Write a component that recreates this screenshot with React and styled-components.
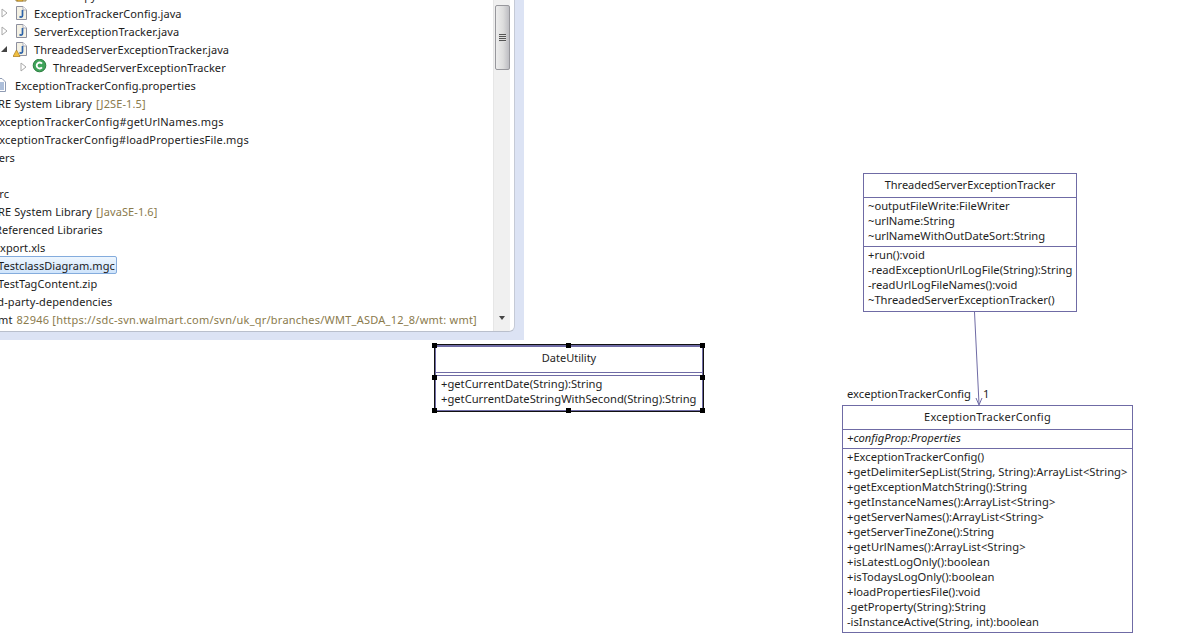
import React from "react";
import styled, { createGlobalStyle } from "styled-components";

const Global = createGlobalStyle`
  html, body { margin: 0; padding: 0; background: #fff; }
  body { width: 1198px; height: 644px; overflow: hidden; font-family: "Noto Sans", "Open Sans", sans-serif; }
`;

const Page = styled.div`
  position: relative;
  width: 1198px;
  height: 644px;
  overflow: hidden;
  background: #fff;
`;

const WindowFrame = styled.div`
  position: absolute;
  left: -20px;
  top: -20px;
  width: 544px;
  height: 360px;
  box-sizing: border-box;
  padding: 0 9px 8px 0;
  background: #dce3f4;
`;

const Explorer = styled.div`
  display: flex;
  height: 100%;
  box-sizing: border-box;
  padding-right: 4px;
  background: #fff;
  border-right: 1px solid #c5cad6;
  border-bottom: 1px solid #b9bfcc;
  border-bottom-right-radius: 6px;
  overflow: hidden;
`;

const TreeViewport = styled.div`
  flex: 1;
  min-width: 0;
  overflow: hidden;
`;

const Tree = styled.div`
  padding-top: 6px;
`;

const Row = styled.div`
  display: flex;
  align-items: center;
  height: 18px;
  margin-left: ${(p) => p.$indent}px;
  white-space: nowrap;
  font-size: 11px;
  letter-spacing: ${(p) => p.$spacing ?? 0.07}px;
  color: #1c1c1c;
`;

const Arrow = styled.span`
  flex: none;
  width: 12px;
  margin-right: 3px;
  display: flex;
  align-items: center;
  justify-content: center;
`;

const IconSlot = styled.span`
  flex: none;
  width: 16px;
  height: 16px;
  margin-right: ${(p) => p.$gap ?? 4}px;
  display: flex;
`;

const Label = styled.span`
  padding: 0 1px;
`;

const Selected = styled(Label)`
  box-sizing: border-box;
  height: 18px;
  line-height: 17px;
  padding: 0 1px 0 2px;
  margin-left: -2px;
  background: linear-gradient(#eef6fe, #cfe4fb);
  border: 1px solid #84acdd;
  border-radius: 2px;
`;

const Decoration = styled.span`
  margin-left: 3px;
  color: #8a7a4c;
`;

const ScrollTrack = styled.div`
  flex: none;
  width: 17px;
  background: #f0f0f0;
  border-left: 1px solid #e6e6e6;
  display: flex;
  flex-direction: column;
  align-items: center;
  box-sizing: border-box;
  padding-top: 25px;
`;

const ScrollThumb = styled.div`
  width: 15px;
  height: 65px;
  box-sizing: border-box;
  background: linear-gradient(90deg, #ededed, #dcdcdc 55%, #bdbdc2);
  border: 1px solid #97979c;
  border-radius: 2px;
  display: flex;
  align-items: center;
  justify-content: center;
`;

const Grip = styled.div`
  width: 7px;
  height: 8px;
  background: repeating-linear-gradient(#555 0 1px, #ddd 1px 2px);
`;

const ScrollDown = styled.div`
  margin-top: auto;
  margin-bottom: 11px;
  width: 0;
  height: 0;
  border-left: 3.5px solid transparent;
  border-right: 3.5px solid transparent;
  border-top: 4px solid #444;
`;

const Node = styled.div`
  position: absolute;
  left: ${(p) => p.$x}px;
  top: ${(p) => p.$y}px;
  width: ${(p) => p.$w}px;
  height: ${(p) => p.$h}px;
  box-sizing: border-box;
  display: flex;
  flex-direction: column;
  background: #fff;
  border: 1px solid #6f6ba5;
  font-size: 11.2px;
  color: #1e1e1e;
  box-shadow: ${(p) => (p.$selected ? "-1px 0 0 #111, 1px 0 0 #111, 0 -1px 0 #111, 0 1px 0 #111" : "none")};
`;

const NodeTitle = styled.div`
  box-sizing: border-box;
  height: ${(p) => p.$h}px;
  flex: none;
  display: flex;
  align-items: center;
  justify-content: center;
  font-size: 11px;
  letter-spacing: ${(p) => p.$spacing ?? 0}px;
  padding-bottom: ${(p) => p.$lift ?? 3}px;
  border-top: ${(p) => (p.$selected ? "1px solid #6f6ba5" : "0")};
`;

const Section = styled.div`
  border-top: 1px solid #6f6ba5;
  padding: 0 0 3px ${(p) => p.$left ?? 4}px;
  flex: none;
`;

const Gap = styled.div`
  height: 2px;
  flex: none;
  border-top: 1px solid #6f6ba5;
`;

const Member = styled.div`
  height: 15px;
  line-height: 15px;
  white-space: nowrap;
  letter-spacing: ${(p) => p.$spacing ?? 0}px;
  font-style: ${(p) => (p.$italic ? "italic" : "normal")};
`;

const Handle = styled.span`
  position: absolute;
  left: ${(p) => p.$x}px;
  top: ${(p) => p.$y}px;
  width: 5px;
  height: 5px;
  background: #000;
`;

const EdgeLayer = styled.svg`
  position: absolute;
  left: 960px;
  top: 310px;
  width: 40px;
  height: 100px;
`;

const EdgeLabel = styled.span`
  position: absolute;
  left: ${(p) => p.$x}px;
  top: ${(p) => p.$y}px;
  font-size: 11.2px;
  line-height: 15px;
  color: #1e1e1e;
  white-space: nowrap;
`;

const Tri = ({ open }) =>
  open ? (
    <svg width="8" height="8" viewBox="0 0 8 8"><path d="M7 1V7H1Z" fill="#444" /></svg>
  ) : (
    <svg width="7" height="10" viewBox="0 0 7 10"><path d="M1 1L6 5L1 9Z" fill="#fff" stroke="#a8a8a8" /></svg>
  );

const PackageIcon = () => (
  <svg width="16" height="16" viewBox="0 0 16 16">
    <path d="M3 3H13V14H3Z" fill="#e8d9a8" stroke="#9a8650" />
    <path d="M4 14L7 8.5L10 14Z" fill="#f0c040" stroke="#a9791a" strokeWidth=".7" />
  </svg>
);

const JavaFile = ({ warn }) => (
  <svg width="16" height="16" viewBox="0 0 16 16">
    <path d="M3.5 1.5H10L13.5 5V14.5H3.5Z" fill="#f4f1e4" stroke="#8d8f9e" />
    <path d="M10 1.5V5H13.5" fill="#fff" stroke="#a9abb8" />
    <path d="M9.5 5V10.5C9.5 12 8 12.5 6.5 11.5" fill="none" stroke="#2c62a8" strokeWidth="1.7" />
    {warn && <path d="M3.5 9L7 15.5H0Z" fill="#f0c040" stroke="#a9791a" strokeWidth=".7" />}
  </svg>
);

const ClassIcon = () => (
  <svg width="16" height="16" viewBox="0 0 16 16">
    <circle cx="7.5" cy="6.5" r="6.3" fill="#3fa45a" stroke="#2c7c3f" />
    <path d="M10 4.6A3 3 0 1 0 10 8.4" fill="none" stroke="#fff" strokeWidth="1.8" />
  </svg>
);

const PropsFile = () => (
  <svg width="16" height="16" viewBox="0 0 16 16">
    <path d="M3.5 1.5H10L13.5 5V14.5H3.5Z" fill="#fff" stroke="#8f9bb3" />
    <path d="M5 6H12M5 8H12M5 10H12M5 12H12" stroke="#5b7fb5" />
  </svg>
);

const treeRows = [
  { indent: 18, arrow: "c", icon: <PackageIcon />, text: "tracker.copy" },
  { indent: 18, arrow: "c", icon: <JavaFile />, text: "ExceptionTrackerConfig.java" },
  { indent: 18, arrow: "c", icon: <JavaFile />, text: "ServerExceptionTracker.java" },
  { indent: 18, arrow: "o", icon: <JavaFile warn />, text: "ThreadedServerExceptionTracker.java" },
  { indent: 37, arrow: "c", icon: <ClassIcon />, text: "ThreadedServerExceptionTracker" },
  { indent: 12, icon: <PropsFile />, text: "ExceptionTrackerConfig.properties", gap: 6 },
  { indent: 14, text: "JRE System Library", deco: "[J2SE-1.5]", spacing: 0.1 },
  { indent: 12, text: "ExceptionTrackerConfig#getUrlNames.mgs", spacing: 0.2 },
  { indent: 12, text: "ExceptionTrackerConfig#loadPropertiesFile.mgs", spacing: 0.18 },
  { indent: -5, text: "Servers" },
  { indent: 0, text: "" },
  { indent: 13, text: "src" },
  { indent: 14, text: "JRE System Library", deco: "[JavaSE-1.6]", spacing: 0.1 },
  { indent: 14, text: "Referenced Libraries" },
  { indent: 13, text: "export.xls" },
  { indent: 17, text: "TestclassDiagram.mgc", selected: true },
  { indent: 17, text: "TestTagContent.zip" },
  { indent: -2, text: "third-party-dependencies", spacing: 0.1 },
  { indent: 8, text: "wmt", deco: "82946 [https://sdc-svn.walmart.com/svn/uk_qr/branches/WMT_ASDA_12_8/wmt: wmt]", spacing: 0.23 },
];

const threaded = {
  fields: ["~outputFileWrite:FileWriter", "~urlName:String", "~urlNameWithOutDateSort:String"],
  ops: ["+run():void", "-readExceptionUrlLogFile(String):String", "-readUrlLogFileNames():void", "~ThreadedServerExceptionTracker()"],
};

const configOps = [
  { text: "+ExceptionTrackerConfig()" },
  { text: "+getDelimiterSepList(String, String):ArrayList<String>", spacing: 0.03 },
  { text: "+getExceptionMatchString():String" },
  { text: "+getInstanceNames():ArrayList<String>", spacing: 0.07 },
  { text: "+getServerNames():ArrayList<String>", spacing: 0.07 },
  { text: "+getServerTineZone():String" },
  { text: "+getUrlNames():ArrayList<String>", spacing: 0.07 },
  { text: "+isLatestLogOnly():boolean" },
  { text: "+isTodaysLogOnly():boolean" },
  { text: "+loadPropertiesFile():void" },
  { text: "-getProperty(String):String" },
  { text: "-isInstanceActive(String, int):boolean" },
];

const handles = [
  [-4, -3], [130, -3], [264, -3],
  [-4, 29], [264, 29],
  [-4, 62], [130, 62], [264, 62],
];

export default function App() {
  return (
    <Page>
      <Global />
      <WindowFrame>
        <Explorer>
          <TreeViewport>
            <Tree>
              {treeRows.map((r, i) => (
                <Row key={i} $indent={r.indent} $spacing={r.spacing}>
                  {r.arrow && (
                    <Arrow>
                      <Tri open={r.arrow === "o"} />
                    </Arrow>
                  )}
                  {r.icon && <IconSlot $gap={r.gap}>{r.icon}</IconSlot>}
                  {r.selected ? <Selected>{r.text}</Selected> : <Label>{r.text}</Label>}
                  {r.deco && <Decoration>{r.deco}</Decoration>}
                </Row>
              ))}
            </Tree>
          </TreeViewport>
          <ScrollTrack>
            <ScrollThumb>
              <Grip />
            </ScrollThumb>
            <ScrollDown />
          </ScrollTrack>
        </Explorer>
      </WindowFrame>

      <Node $x={435} $y={345} $w={268} $h={66} $selected>
        <NodeTitle $h={26} $selected $lift={5}>DateUtility</NodeTitle>
        <Gap />
        <Section $left={5}>
          <Member>+getCurrentDate(String):String</Member>
          <Member>+getCurrentDateStringWithSecond(String):String</Member>
        </Section>
        {handles.map(([x, y], i) => (
          <Handle key={i} $x={x} $y={y} />
        ))}
      </Node>

      <Node $x={863} $y={173} $w={214} $h={139}>
        <NodeTitle $h={23}>ThreadedServerExceptionTracker</NodeTitle>
        <Section>
          {threaded.fields.map((m) => <Member key={m}>{m}</Member>)}
        </Section>
        <Section>
          {threaded.ops.map((m) => <Member key={m}>{m}</Member>)}
        </Section>
      </Node>

      <EdgeLayer viewBox="0 0 40 100">
        <path d="M14.5 2L19 94" stroke="#6f6ba5" fill="none" />
        <path d="M16 88L19 95L22 88" stroke="#6f6ba5" fill="none" />
      </EdgeLayer>
      <EdgeLabel $x={847} $y={386}>exceptionTrackerConfig</EdgeLabel>
      <EdgeLabel $x={983} $y={386}>1</EdgeLabel>

      <Node $x={842} $y={405} $w={291} $h={228}>
        <NodeTitle $h={23} $spacing={0.22}>ExceptionTrackerConfig</NodeTitle>
        <Section>
          <Member $italic>+configProp:Properties</Member>
        </Section>
        <Section>
          {configOps.map((m) => <Member key={m.text} $spacing={m.spacing}>{m.text}</Member>)}
        </Section>
      </Node>
    </Page>
  );
}
